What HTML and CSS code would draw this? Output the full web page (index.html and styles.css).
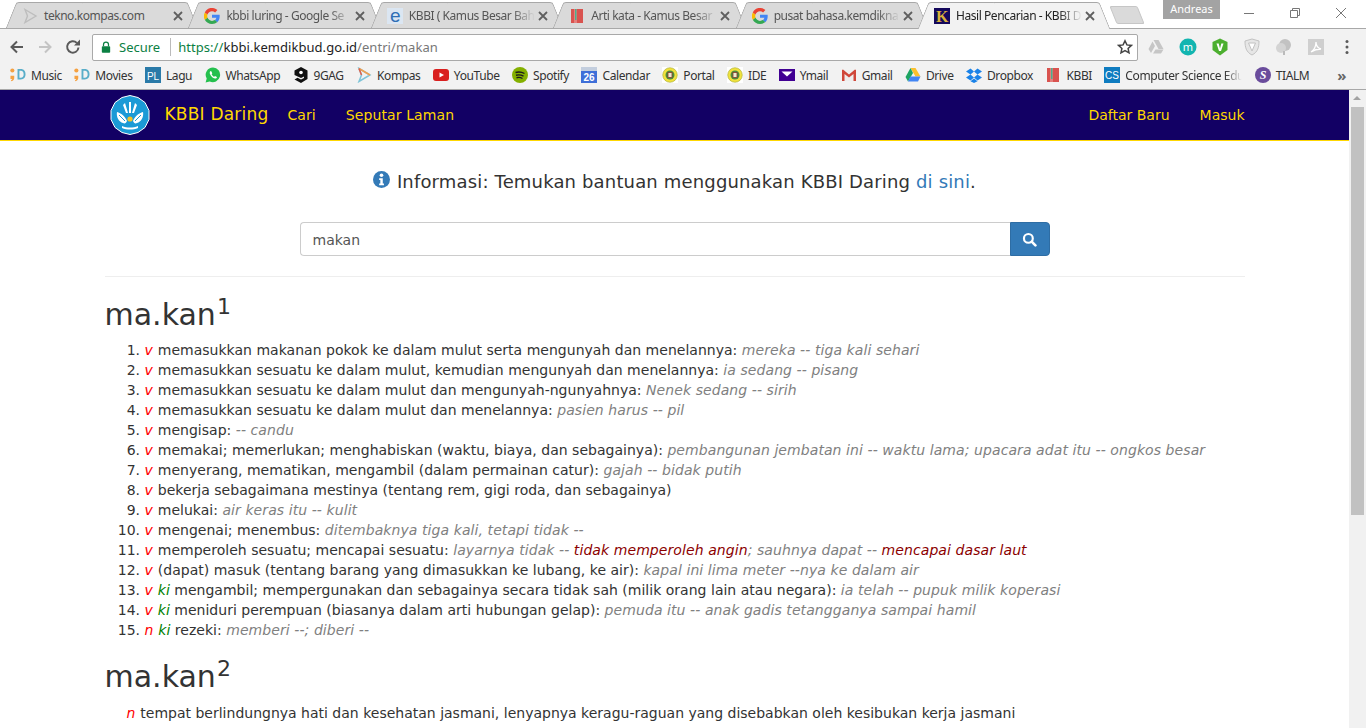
FILE: index.html
```html
<!DOCTYPE html>
<html lang="id">
<head>
    <meta charset="UTF-8">
    <meta name="viewport" content="width=device-width, initial-scale=1.0">
    <title>Hasil Pencarian - KBBI Daring</title>
    <link rel="stylesheet" href="styles.css">
</head>
<body>

    <!-- Ikon yang dipakai berulang -->
    <svg class="defs" width="0" height="0">
        <symbol id="i-google" viewBox="0 0 16 16">
            <path d="M15.700 8.200c0-.6 0-1-.1-1.500H8v3h4.400c-.2 1-.8 1.900-1.700 2.500l2.600 2c1.500-1.400 2.400-3.500 2.400-6z" fill="#4285f4"/>
            <path d="M8 16c2.200 0 4-.7 5.300-1.900l-2.600-2c-.7.500-1.600.8-2.700.8-2.100 0-3.900-1.400-4.500-3.300l-2.700 2.100C2.100 14.200 4.800 16 8 16z" fill="#34a853"/>
            <path d="M3.500 9.600a4.900 4.900 0 0 1 0-3.100L.8 4.400a8 8 0 0 0 0 7.300z" fill="#fbbc05"/>
            <path d="M8 3.200c1.200 0 2.300.4 3.100 1.200l2.300-2.300A8 8 0 0 0 .8 4.400l2.700 2.100C4.100 4.600 5.900 3.200 8 3.200z" fill="#ea4335"/>
        </symbol>
        <symbol id="i-book" viewBox="0 0 16 16">
            <rect x="2" y="1" width="12" height="14" fill="#d9534f"/>
            <rect x="5" y="1" width="3" height="14" fill="#e57f7c"/>
            <rect x="6" y="1" width="1.500" height="11" fill="#4cae8c"/>
        </symbol>
        <symbol id="i-3d" viewBox="1 1.500 17 14.500">
            <circle cx="3.500" cy="4" r="2.200" fill="#f5a142"/>
            <path d="M1.500 9.500h4v2.500c0 1.500-1 3-3 3.500l-.5-1.200c.8-.3 1.200-.8 1.300-1.300H1.500z" fill="#f5a142"/>
            <path d="M9 2.500h3.500c3.300 0 5 2.300 5 5.500s-1.700 5.500-5 5.500H9zM11 4.300v7.400h1.500c2 0 3-1.500 3-3.700s-1-3.700-3-3.700z" fill="#5aaec9"/>
        </symbol>
        <symbol id="i-ide" viewBox="0 0 16 16">
            <rect width="16" height="16" fill="#fff"/>
            <circle cx="8" cy="8" r="7.300" fill="#f0e23c" stroke="#a3a83a" stroke-width=".6"/>
            <circle cx="8" cy="8" r="4.500" fill="#4c8a3f"/>
            <rect x="6" y="5.500" width="4" height="5" fill="#f0e9d0" stroke="#8a3b2a" stroke-width=".8"/>
        </symbol>
        <symbol id="i-close" viewBox="0 0 10 10">
            <path d="M1 1l8 8M9 1l-8 8" fill="none" stroke="#5f5f5f" stroke-width="1.800"/>
        </symbol>
    </svg>

    <!-- Baris tab -->
    <div class="tabstrip">
        <div class="tab">
            <svg class="favicon" viewBox="0 0 16 16"><path d="M3 1.500l11 6.500-11 6.500 2.500-6.500z" fill="none" stroke="#bdbdbd" stroke-width="1.400"/></svg>
            <span class="tab-title">tekno.kompas.com</span><svg class="tab-x"><use href="#i-close"/></svg>
        </div>
        <div class="tab">
            <svg class="favicon"><use href="#i-google"/></svg>
            <span class="tab-title fade">kbbi luring - Google Se</span><svg class="tab-x"><use href="#i-close"/></svg>
        </div>
        <div class="tab">
            <svg class="favicon" viewBox="0 0 16 16"><rect width="16" height="16" fill="#dbe6f2"/><text x="8" y="14" class="ie-e">e</text></svg>
            <span class="tab-title fade">KBBI ( Kamus Besar Bah</span><svg class="tab-x"><use href="#i-close"/></svg>
        </div>
        <div class="tab">
            <svg class="favicon"><use href="#i-book"/></svg>
            <span class="tab-title fade">Arti kata - Kamus Besar</span><svg class="tab-x"><use href="#i-close"/></svg>
        </div>
        <div class="tab">
            <svg class="favicon"><use href="#i-google"/></svg>
            <span class="tab-title fade">pusat bahasa.kemdikna</span><svg class="tab-x"><use href="#i-close"/></svg>
        </div>
        <div class="tab active">
            <svg class="favicon" viewBox="0 0 16 16"><rect width="16" height="16" fill="#14085c"/><text x="8" y="13.500" class="k-logo">K</text></svg>
            <span class="tab-title fade">Hasil Pencarian - KBBI D</span><svg class="tab-x"><use href="#i-close"/></svg>
        </div>
        <div class="newtab"></div>
        <div class="profile">Andreas</div>
        <div class="winbtns">
            <svg viewBox="0 0 12 12"><path d="M1 6.500h10" stroke="#777" fill="none"/></svg>
            <svg viewBox="0 0 12 12"><path d="M1.500 3.500h7v7h-7zM3.500 3.500v-2h7v7h-2" stroke="#777" fill="none"/></svg>
            <svg viewBox="0 0 12 12"><path d="M1 1l10 10M11 1L1 11" stroke="#777" fill="none"/></svg>
        </div>
    </div>

    <!-- Toolbar dan alamat -->
    <div class="toolbar">
        <svg class="tool" viewBox="0 0 16 16"><path d="M14 8H3M8 2.500L2.500 8 8 13.500" fill="none" stroke="#5a5a5a" stroke-width="2"/></svg>
        <svg class="tool" viewBox="0 0 16 16"><path d="M2 8h11M8 2.500L13.500 8 8 13.500" fill="none" stroke="#c4c4c4" stroke-width="2"/></svg>
        <svg class="tool" viewBox="0 0 16 16"><path d="M13.500 8.500A5.700 5.700 0 1 1 11.800 3.900" fill="none" stroke="#5a5a5a" stroke-width="2"/><path d="M9 6.500h6v-6z" fill="#5a5a5a"/></svg>
        <div class="omnibox">
            <svg class="lock" viewBox="0 0 12 14"><path d="M3 6V4a3 3 0 0 1 6 0v2" fill="none" stroke="#0b8043" stroke-width="1.500"/><rect x="1" y="6" width="10" height="8" rx="1" fill="#0b8043"/></svg>
            <span class="secure">Secure</span>
            <span class="omni-sep"></span>
            <span class="url"><span class="url-https">https://</span><span class="url-host">kbbi.kemdikbud.go.id</span>/entri/makan</span>
            <svg class="star" viewBox="0 0 16 16"><path d="M8 1.800l1.900 4.100 4.500.5-3.300 3 .9 4.400L8 11.600l-4 2.200.9-4.400-3.300-3 4.500-.5z" fill="none" stroke="#444" stroke-width="1.500"/></svg>
        </div>
        <div class="exts">
            <svg viewBox="0 0 18 18"><path d="M6.500 2h5l5 9h-5zM5.500 3.500l2.500 4.500-4 7L1.500 11z M6 15.500l2.500-4h8l-2.500 4z" fill="#c6c6c6"/></svg>
            <svg viewBox="0 0 18 18"><circle cx="9" cy="9" r="8.500" fill="#12b5b0"/><text x="9" y="12.500" class="ext-m">m</text></svg>
            <svg viewBox="0 0 18 18"><path d="M9 .5l7.500 3.500v8L9 17.500 1.500 12V4z" fill="#4caf2f"/><path d="M5.500 5.500h2.200L9 10.500l1.300-5h2.200L10 13H8z" fill="#fff"/></svg>
            <svg viewBox="0 0 18 18"><path d="M9 1l7 2c0 6-1 11-7 14C3 14 2 9 2 3z" fill="#e6e6e6" stroke="#c2c2c2"/><path d="M5.500 5h7L9 13z" fill="#fff" stroke="#c2c2c2"/></svg>
            <svg viewBox="0 0 18 18"><circle cx="10" cy="7" r="6" fill="#c2c2c2"/><circle cx="6" cy="10" r="5" fill="#d4d4d4"/><path d="M9 13v4" stroke="#bbb" stroke-width="2"/></svg>
            <svg viewBox="0 0 18 18"><rect x="1" y="1" width="16" height="16" fill="#cfcfcf"/><path d="M4 14c3-2 5-6 5-10 0 4 2 6 5 7-3 0-7 1-10 3z" fill="none" stroke="#fff" stroke-width="1.300"/></svg>
        </div>
        <svg class="menu-dots" viewBox="0 0 4 16"><circle cx="2" cy="2.500" r="1.500" fill="#5a5a5a"/><circle cx="2" cy="8" r="1.500" fill="#5a5a5a"/><circle cx="2" cy="13.500" r="1.500" fill="#5a5a5a"/></svg>
    </div>

    <!-- Bookmark -->
    <div class="bookmarks">
        <a class="bm"><svg><use href="#i-3d"/></svg>Music</a>
        <a class="bm"><svg><use href="#i-3d"/></svg>Movies</a>
        <a class="bm"><svg viewBox="0 0 16 16"><rect width="16" height="16" fill="#2a7aa8"/><text x="8" y="12.500" class="bm-letters">PL</text></svg>Lagu</a>
        <a class="bm"><svg viewBox="0 0 16 16"><path d="M8 .5a7.300 7.300 0 0 0-6.300 11L.6 15.500l4.100-1.100A7.300 7.300 0 1 0 8 .5z" fill="#25c04e"/><path d="M5.500 4c-1 1-1.200 2.500.3 4.500s3.500 3.500 5 2.900c1-.4 1.200-1.200 1.100-1.500l-1.900-1-.8.900c-1-.3-2.100-1.400-2.600-2.500l.7-.8-.8-2z" fill="#fff"/></svg>WhatsApp</a>
        <a class="bm"><svg viewBox="0 0 16 16"><path d="M8 0l6.500 3.500v8.500L8 16l-6.500-3.500 3-1.700L8 12.500l3-1.500v-1.500L8 11 1.500 8V3.500z" fill="#111"/><circle cx="8" cy="5.500" r="1.800" fill="#fff"/></svg>9GAG</a>
        <a class="bm"><svg viewBox="0 0 16 16"><path d="M3 1.500l11 6.500-11 6.500 2.500-6.500z" fill="none" stroke="#7ec4d8" stroke-width="1.500"/><path d="M3 1.500l11 6.500" stroke="#f0a050" stroke-width="1.500"/><path d="M3 1.500L5.500 8" stroke="#e0604a" stroke-width="1.500"/></svg>Kompas</a>
        <a class="bm"><svg viewBox="0 0 16 16"><rect y="2" width="16" height="12" rx="3" fill="#d9201f"/><path d="M6.500 5.500v5L11 8z" fill="#fff"/></svg>YouTube</a>
        <a class="bm"><svg viewBox="0 0 16 16"><circle cx="8" cy="8" r="8" fill="#84b000"/><path d="M3.500 5.500c3-.8 6-.6 9 1M4 8.200c2.600-.6 5-.4 7.500 1M4.500 10.700c2-.5 4.200-.3 6 .8" fill="none" stroke="#1c1c1c" stroke-width="1.400"/></svg>Spotify</a>
        <a class="bm"><svg viewBox="0 0 16 16"><rect y="0" width="16" height="16" fill="#3f6fd8"/><rect width="16" height="4" fill="#c3cede"/><text x="8" y="14" class="bm-cal">26</text></svg>Calendar</a>
        <a class="bm"><svg><use href="#i-ide"/></svg>Portal</a>
        <a class="bm"><svg><use href="#i-ide"/></svg>IDE</a>
        <a class="bm"><svg viewBox="0 0 16 16"><rect y="2" width="16" height="12" fill="#410093"/><path d="M2.500 4.500h11L8 9.500z" fill="#fff"/></svg>Ymail</a>
        <a class="bm"><svg viewBox="0 0 16 16"><path d="M1 3h14v11H1z" fill="#eee"/><path d="M1 3v11h2.500V7L8 10.500 12.500 7v7H15V3l-1-.5L8 7.500 2 2.500z" fill="#d0473a"/></svg>Gmail</a>
        <a class="bm"><svg viewBox="0 0 16 16"><path d="M5.500 1h5l5 8.500h-5z" fill="#fbc02d"/><path d="M5.500 1L.5 10l2.500 4.500L8 6z" fill="#1da462"/><path d="M3 14.500h10l2.500-5h-10z" fill="#4285f4"/></svg>Drive</a>
        <a class="bm"><svg viewBox="0 0 16 16"><path d="M4.500 1.500L0 4.500l4.500 3L8 4.500zM11.500 1.500L8 4.500l3.500 3 4.500-3zM0 10.500l4.500 3L8 10.500l-3.500-3zM16 10.500l-4.500 3L8 10.500l3.500-3zM4.500 14.200L8 16l3.500-1.800L8 11.500z" fill="#1a82e8"/></svg>Dropbox</a>
        <a class="bm"><svg><use href="#i-book"/></svg>KBBI</a>
        <a class="bm"><svg viewBox="0 0 16 16"><rect width="16" height="16" fill="#0f7cc0"/><text x="8" y="12" class="bm-letters">CS</text></svg><span class="bm-fade">Computer Science Edu</span></a>
        <a class="bm"><svg viewBox="0 0 16 16"><circle cx="8" cy="8" r="8" fill="#6a4c9c"/><text x="8" y="12" class="bm-s">S</text></svg>TIALM</a>
        <span class="bm-more">»</span>
    </div>

    <div class="viewport">
        <div class="page">
            <nav class="navbar">
                <div class="container nav-inner">
                    <svg class="nav-logo" viewBox="0 0 40 40">
                        <path d="M20 .5l8 2 7 5 4 8v9l-4 8-7 5-8 2-8-2-7-5-4-8v-9l4-8 7-5z" fill="#1b9ad6" stroke="#fff"/>
                        <path d="M19 7h2v11h-2zM15 8l3 10h-2l-3-8zM25 8l-3 10h2l3-8z" fill="#fff"/>
                        <path d="M7 17c4 1 8 4 10 9-1 2-2 3-4 2-4-1-7-6-6-11zM33 17c-4 1-8 4-10 9 1 2 2 3 4 2 4-1 7-6 6-11z" fill="#fff"/>
                        <path d="M9 20l6 6M31 20l-6 6" stroke="#1b9ad6"/>
                        <circle cx="20" cy="24" r="2.600" fill="#f3c22b"/>
                        <path d="M12 31c5 2 11 2 16 0v2c-5 2-11 2-16 0z" fill="#fff"/>
                    </svg>
                    <a class="brand">KBBI Daring</a>
                    <a class="nav-link">Cari</a>
                    <a class="nav-link">Seputar Laman</a>
                    <div class="nav-right">
                        <a class="nav-link">Daftar Baru</a>
                        <a class="nav-link">Masuk</a>
                    </div>
                </div>
            </nav>

            <div class="container">
                <h4 class="info">
                    <svg class="info-icon" viewBox="0 0 16 16"><circle cx="8" cy="8" r="8" fill="#337ab7"/><circle cx="8" cy="4" r="1.700" fill="#fff"/><path d="M5.800 6.800h3.400v5h1.100v1.700H5.800v-1.700h1.100V8.500H5.800z" fill="#fff"/></svg>
                    Informasi: Temukan bantuan menggunakan KBBI Daring <a class="link">di sini</a>.
                </h4>

                <div class="search">
                    <div class="search-input">makan</div>
                    <div class="search-btn">
                        <svg viewBox="0 0 16 16"><circle cx="6.800" cy="6.800" r="4.700" fill="none" stroke="#fff" stroke-width="2.300"/><path d="M10.300 10.300l4 4" stroke="#fff" stroke-width="2.800" stroke-linecap="round"/></svg>
                    </div>
                </div>

                <hr class="rule">

                <h2 class="entry">ma.kan<sup>1</sup></h2>
                <ol class="defs-list">
                    <li><i class="pos">v</i> memasukkan makanan pokok ke dalam mulut serta mengunyah dan menelannya: <i class="ex">mereka -- tiga kali sehari</i></li>
                    <li><i class="pos">v</i> memasukkan sesuatu ke dalam mulut, kemudian mengunyah dan menelannya: <i class="ex">ia sedang -- pisang</i></li>
                    <li><i class="pos">v</i> memasukkan sesuatu ke dalam mulut dan mengunyah-ngunyahnya: <i class="ex">Nenek sedang -- sirih</i></li>
                    <li><i class="pos">v</i> memasukkan sesuatu ke dalam mulut dan menelannya: <i class="ex">pasien harus -- pil</i></li>
                    <li><i class="pos">v</i> mengisap: <i class="ex">-- candu</i></li>
                    <li><i class="pos">v</i> memakai; memerlukan; menghabiskan (waktu, biaya, dan sebagainya): <i class="ex">pembangunan jembatan ini -- waktu lama; upacara adat itu -- ongkos besar</i></li>
                    <li><i class="pos">v</i> menyerang, mematikan, mengambil (dalam permainan catur): <i class="ex">gajah -- bidak putih</i></li>
                    <li><i class="pos">v</i> bekerja sebagaimana mestinya (tentang rem, gigi roda, dan sebagainya)</li>
                    <li><i class="pos">v</i> melukai: <i class="ex">air keras itu -- kulit</i></li>
                    <li><i class="pos">v</i> mengenai; menembus: <i class="ex">ditembaknya tiga kali, tetapi tidak --</i></li>
                    <li><i class="pos">v</i> memperoleh sesuatu; mencapai sesuatu: <i class="ex">layarnya tidak -- <span class="ex-mean">tidak memperoleh angin</span>; sauhnya dapat -- <span class="ex-mean">mencapai dasar laut</span></i></li>
                    <li><i class="pos">v</i> (dapat) masuk (tentang barang yang dimasukkan ke lubang, ke air): <i class="ex">kapal ini lima meter --nya ke dalam air</i></li>
                    <li><i class="pos">v</i> <i class="ki">ki</i> mengambil; mempergunakan dan sebagainya secara tidak sah (milik orang lain atau negara): <i class="ex">ia telah -- pupuk milik koperasi</i></li>
                    <li><i class="pos">v</i> <i class="ki">ki</i> meniduri perempuan (biasanya dalam arti hubungan gelap): <i class="ex">pemuda itu -- anak gadis tetangganya sampai hamil</i></li>
                    <li><i class="pos">n</i> <i class="ki">ki</i> rezeki: <i class="ex">memberi --; diberi --</i></li>
                </ol>

                <h2 class="entry">ma.kan<sup>2</sup></h2>
                <p class="single"><i class="pos">n</i> tempat berlindungnya hati dan kesehatan jasmani, lenyapnya keragu-raguan yang disebabkan oleh kesibukan kerja jasmani</p>
            </div>
        </div>

        <!-- Scrollbar -->
        <div class="scrollbar">
            <div class="scroll-up"></div>
            <div class="scroll-thumb"></div>
        </div>
    </div>

</body>
</html>
```

FILE: styles.css
```css
html, body {
    margin: 0;
    padding: 0;
    height: 728px;
    overflow: hidden;
}
body {
    font-family: "DejaVu Sans", Verdana, sans-serif;
    font-size: 14px;
    color: #333;
    background: #fff;
    display: flex;
    flex-direction: column;
}
.defs {
    position: absolute;
}

/* Baris tab */
.tabstrip {
    height: 28px;
    flex: none;
    display: flex;
    align-items: flex-end;
    padding-left: 6px;
    border-bottom: 1px solid #a8a8a8;
    font-family: "Noto Sans", sans-serif;
    font-size: 12px;
    letter-spacing: -0.45px;
    position: relative;
}
.tab {
    width: 192px;
    height: 27px;
    margin-right: -9.6px;
    display: flex;
    align-items: center;
    padding: 0 15px 0 16px;
    box-sizing: border-box;
    position: relative;
    color: #555;
    margin-bottom: -1px;
}
.tab::before, .tab::after {
    content: "";
    position: absolute;
    top: 0;
    bottom: 1px;
    width: 55%;
    background: #dadada;
    border: 1px solid #a8a8a8;
    border-bottom: none;
    z-index: -1;
    box-sizing: border-box;
}
.tab::before {
    left: 5px;
    border-right: none;
    border-radius: 3px 0 0 0;
    transform: skewX(-22deg);
}
.tab::after {
    right: 5px;
    border-left: none;
    border-radius: 0 3px 0 0;
    transform: skewX(22deg);
}
.tab.active {
    z-index: 2;
    color: #222;
}
.tab.active::before, .tab.active::after {
    background: #f2f2f2;
    bottom: 0;
}
.favicon {
    width: 16px;
    height: 16px;
    flex: none;
    margin-right: 6px;
}
.tab-title {
    flex: 1;
    min-width: 0;
    white-space: nowrap;
}
.tab-title.fade {
    -webkit-mask-image: linear-gradient(to right, #000 82%, transparent);
    mask-image: linear-gradient(to right, #000 82%, transparent);
}
.tab-x {
    width: 10px;
    height: 10px;
    flex: none;
    margin-left: 3px;
}
.ie-e {
    font-family: "Liberation Sans", sans-serif;
    font-size: 19px;
    fill: #2f6fb5;
    text-anchor: middle;
}
.k-logo {
    font-family: "Liberation Serif", serif;
    font-weight: bold;
    font-size: 16px;
    fill: #d9b13a;
    text-anchor: middle;
}
.newtab {
    width: 26px;
    height: 16px;
    margin: 0 0 4px 13px;
    background: #dadada;
    border: 1px solid #c6c6c6;
    border-radius: 2px;
    transform: skewX(22deg);
}
.profile {
    position: absolute;
    left: 1163px;
    top: 0;
    width: 57px;
    height: 19px;
    background: #a3a3a3;
    color: #fff;
    font-size: 11px;
    letter-spacing: 0;
    line-height: 18px;
    text-align: center;
}
.winbtns {
    position: absolute;
    right: 0;
    top: 7px;
    display: flex;
    gap: 34px;
    padding-right: 19px;
}
.winbtns svg {
    width: 12px;
    height: 12px;
}

/* Toolbar */
.toolbar {
    height: 32px;
    flex: none;
    background: #f2f2f2;
    display: flex;
    align-items: center;
    padding: 4px 0 0 9px;
    box-sizing: border-box;
}
.tool {
    width: 16px;
    height: 16px;
    margin-right: 12px;
}
.omnibox {
    width: 1046px;
    height: 27px;
    margin-left: -1px;
    box-sizing: border-box;
    background: #fff;
    border: 1px solid #a9a9a9;
    border-radius: 2px;
    display: flex;
    align-items: center;
    padding-left: 8px;
    font-family: "Noto Sans", sans-serif;
    font-size: 13px;
    color: #777;
}
.lock {
    width: 10px;
    height: 12px;
    margin-right: 8px;
}
.secure {
    color: #0b8043;
}
.omni-sep {
    width: 1px;
    height: 18px;
    background: #bbb;
    margin: 0 7px 0 10px;
}
.url {
    letter-spacing: 0.05px;
}
.url-https {
    color: #0b8043;
}
.url-host {
    color: #222;
}
.star {
    width: 16px;
    height: 16px;
    margin-left: auto;
    margin-right: 4px;
}
.exts {
    display: flex;
    gap: 14px;
    margin-left: 9px;
}
.exts svg {
    width: 18px;
    height: 18px;
}
.ext-m {
    font-family: "Noto Sans", sans-serif;
    font-size: 11px;
    fill: #fff;
    text-anchor: middle;
}
.menu-dots {
    width: 4px;
    height: 16px;
    margin-left: 20px;
}

/* Bookmark */
.bookmarks {
    height: 29px;
    flex: none;
    box-sizing: border-box;
    background: #f2f2f2;
    border-bottom: 1px solid #a8a8a8;
    display: flex;
    align-items: center;
    padding: 0 20px 0 10px;
    gap: 12.4px;
    font-family: "Noto Sans", sans-serif;
    font-size: 12px;
    letter-spacing: -0.4px;
    color: #333;
    white-space: nowrap;
}
.bm {
    display: flex;
    align-items: center;
    gap: 5px;
}
.bm svg {
    width: 16px;
    height: 16px;
    flex: none;
}
.bm-letters {
    font-family: "Liberation Sans", sans-serif;
    font-size: 10px;
    fill: #fff;
    text-anchor: middle;
    letter-spacing: 0;
}
.bm-cal {
    font-family: "Liberation Sans", sans-serif;
    font-size: 10px;
    font-weight: bold;
    fill: #fff;
    text-anchor: middle;
    letter-spacing: 0;
}
.bm-s {
    font-family: "Liberation Serif", serif;
    font-style: italic;
    font-weight: bold;
    font-size: 12px;
    fill: #fff;
    text-anchor: middle;
    letter-spacing: 0;
}
.bm-fade {
    width: 117px;
    -webkit-mask-image: linear-gradient(to right, #000 85%, transparent);
    mask-image: linear-gradient(to right, #000 85%, transparent);
}
.bm-more {
    margin-left: auto;
    font-size: 15px;
    font-weight: bold;
    color: #666;
}

/* Halaman */
.viewport {
    flex: 1;
    min-height: 0;
    display: flex;
}
.page {
    flex: 1;
    min-width: 0;
    overflow: hidden;
}
.container {
    width: 1140px;
    margin: 0 auto;
}
.navbar {
    height: 51px;
    box-sizing: border-box;
    background: #120064;
    border-bottom: 1px solid #ffd700;
}
.nav-inner {
    display: flex;
    align-items: center;
    height: 50px;
    color: #ffd700;
}
.nav-logo {
    width: 40px;
    height: 40px;
    margin-left: 5px;
    margin-right: 15px;
}
.brand {
    font-size: 17px;
    letter-spacing: 0.2px;
    margin-right: 19px;
    margin-bottom: 3px;
}
.nav-link {
    font-size: 14px;
    letter-spacing: 0.1px;
    margin-right: 30px;
}
.nav-right {
    margin-left: auto;
    display: flex;
}
.nav-right .nav-link {
    letter-spacing: 0;
}
.nav-right .nav-link:last-child {
    margin-right: 0;
}
.info {
    font-size: 18px;
    font-weight: normal;
    letter-spacing: 0.16px;
    text-align: center;
    line-height: 21px;
    margin: 30px 0;
}
.info-icon {
    width: 17px;
    height: 17px;
    margin-right: 1px;
}
.link {
    color: #337ab7;
}
.search {
    width: 750px;
    height: 34px;
    margin: 0 auto;
    display: flex;
}
.search-input {
    flex: 1;
    box-sizing: border-box;
    border: 1px solid #ccc;
    border-right: none;
    border-radius: 4px 0 0 4px;
    padding: 7px 12px;
    line-height: 20px;
    color: #555;
}
.search-btn {
    width: 40px;
    background: #337ab7;
    border: 1px solid #2e6da4;
    border-radius: 0 4px 4px 0;
    box-sizing: border-box;
    display: flex;
    align-items: center;
    justify-content: center;
}
.search-btn svg {
    width: 15px;
    height: 15px;
}
.rule {
    border: none;
    border-top: 1px solid #eee;
    margin: 20px 0 21px;
}
.entry {
    font-size: 30px;
    font-weight: normal;
    line-height: 33px;
    margin: 20px 0 10px;
}
.entry sup {
    font-size: 22px;
    line-height: 0;
    position: relative;
    vertical-align: baseline;
    top: -11px;
    margin-left: 1px;
}
.defs-list {
    margin: -1px 0 11px;
    padding-left: 40px;
    line-height: 20px;
    letter-spacing: 0.015px;
}
.pos {
    color: #ff0000;
    margin-right: 0.5px;
}
.ki {
    color: #008000;
}
.ex {
    color: #808080;
    letter-spacing: 0.08px;
}
.ex-mean {
    color: #8b0000;
}
.single {
    margin: 0;
    padding-left: 22px;
    line-height: 20px;
}

/* Scrollbar */
.scrollbar {
    width: 17px;
    flex: none;
    background: #f1f1f1;
}
.scroll-up {
    height: 17px;
    position: relative;
}
.scroll-up::after {
    content: "";
    position: absolute;
    left: 4px;
    top: 6px;
    border: 4px solid transparent;
    border-top: none;
    border-bottom: 4px solid #a3a3a3;
}
.scroll-thumb {
    height: 408px;
    margin: 0 2px;
    background: #c1c1c1;
}
```
